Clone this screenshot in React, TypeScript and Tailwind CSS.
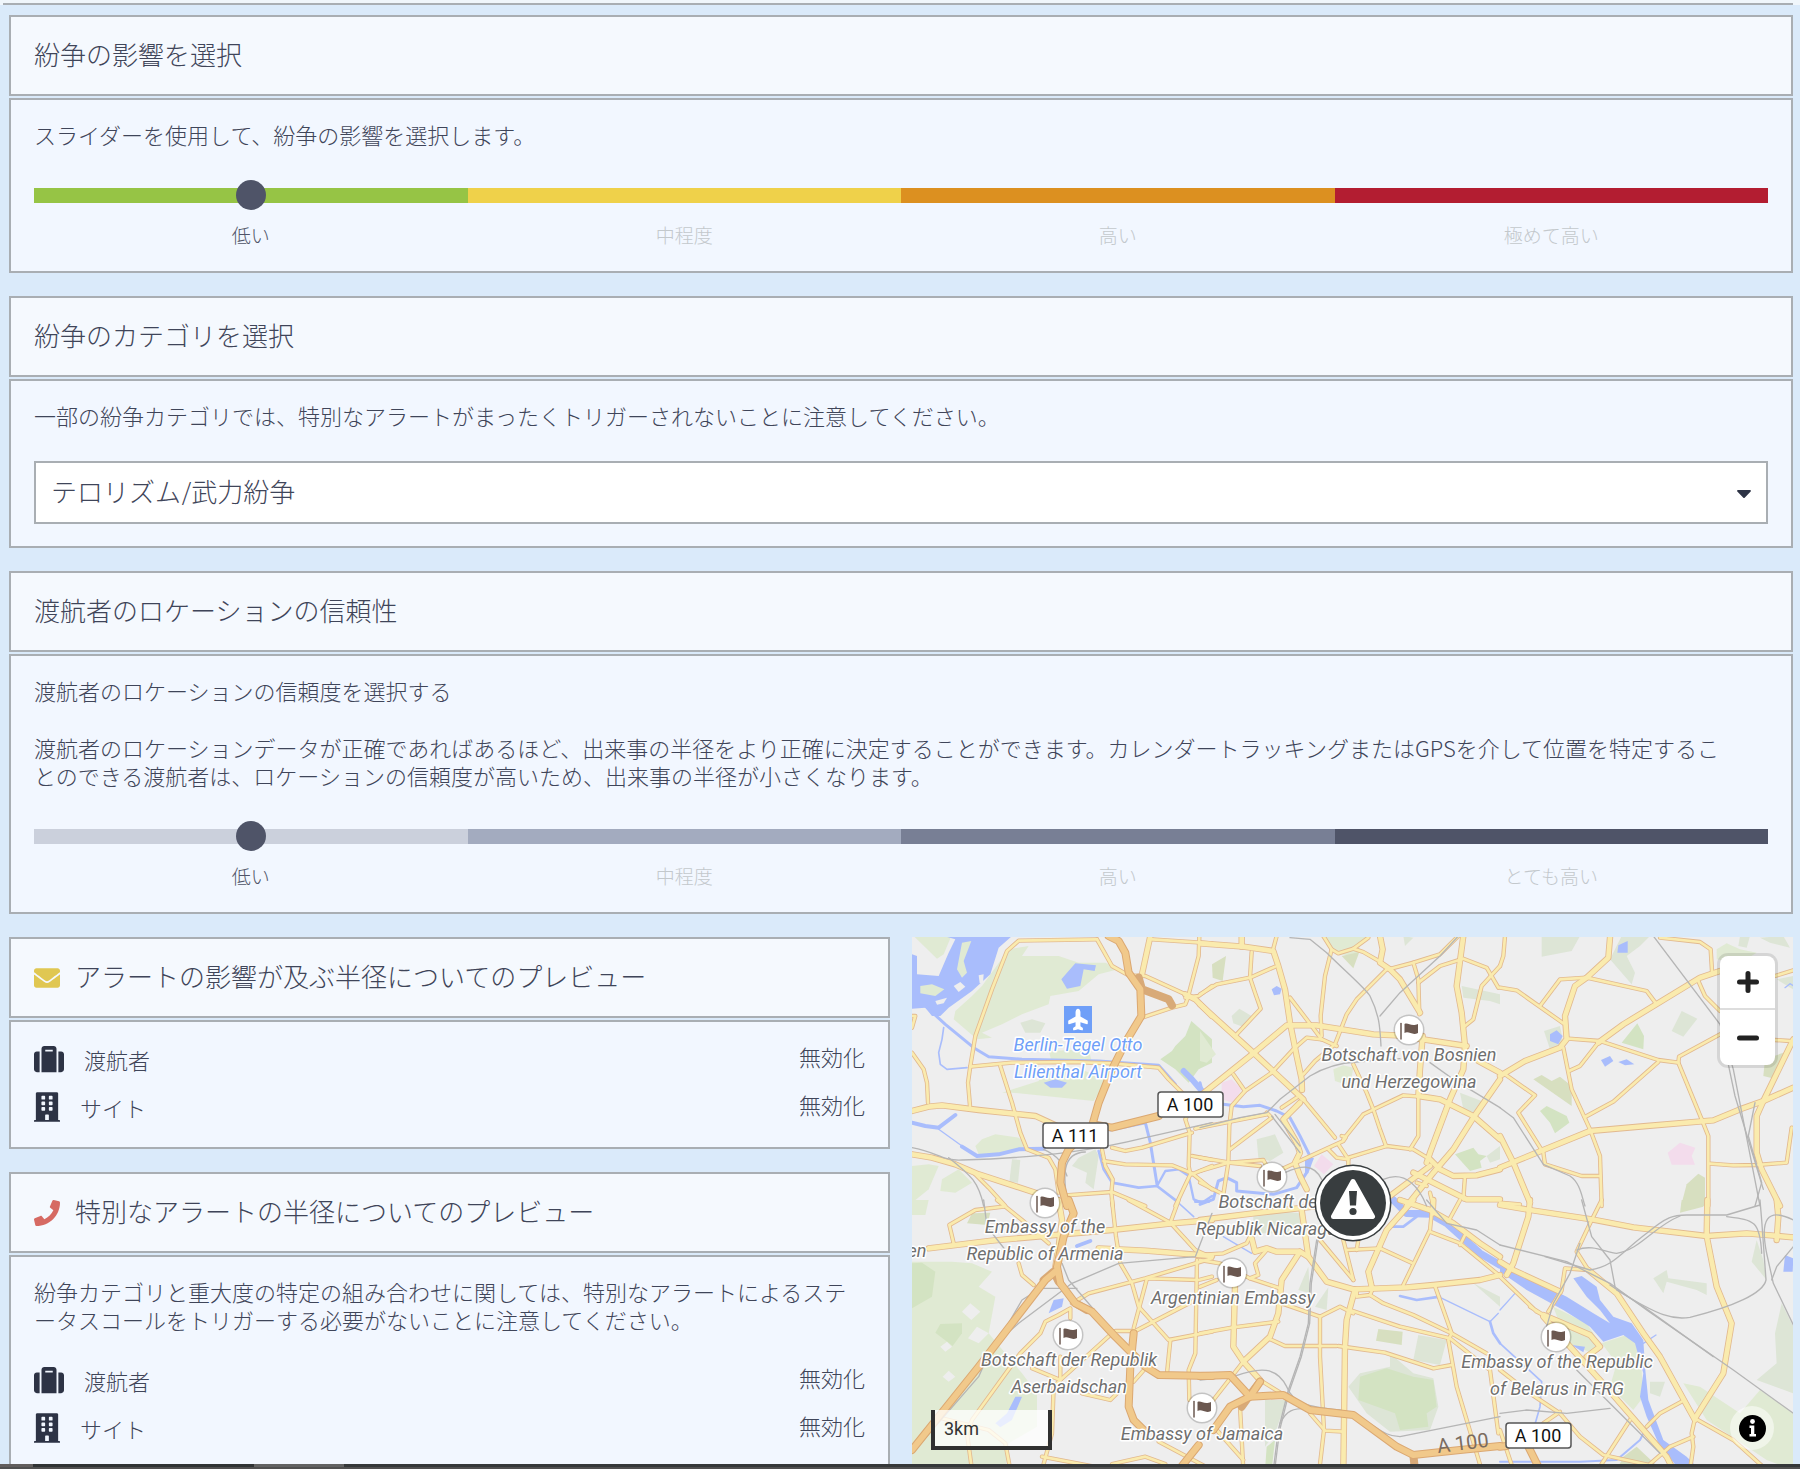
import React, { useState } from "react";
import {
  FaBuilding,
  FaCaretDown,
  FaEnvelope,
  FaPhone,
  FaPlane,
  FaSuitcase,
} from "react-icons/fa";

/* ---------- panels ---------- */

function Panel({
  title,
  icon,
  children,
}: {
  title: string;
  icon?: React.ReactNode;
  children: React.ReactNode;
}) {
  return (
    <section className="flex flex-col gap-[2px]">
      <header className="flex h-[81px] items-center gap-[15px] border-2 border-[#a9aeb3] bg-[#f5f9fe] px-[23px]">
        {icon}
        <h2 className="pb-1 text-[26px] leading-[32px]">{title}</h2>
      </header>
      <div className="border-2 border-[#a9aeb3] bg-[#f2f7ff] px-[23px] pt-5 pb-[22px] text-[22px] leading-[28px]">
        {children}
      </div>
    </section>
  );
}

function LevelSlider({
  label,
  colors,
  levels,
}: {
  label: string;
  colors: string[];
  levels: string[];
}) {
  const [value, setValue] = useState(0);
  return (
    <div className="mt-8">
      <div className="grid h-[30px] items-center">
        <div className="col-start-1 row-start-1 grid h-[15px] grid-cols-4">
          {colors.map((c) => (
            <div key={c} className={c} />
          ))}
        </div>
        <input
          type="range"
          aria-label={label}
          min={0}
          max={levels.length - 1}
          value={value}
          onChange={(e) => setValue(Number(e.target.value))}
          className="z-10 col-start-1 row-start-1 mx-[calc(12.5%-15px)] h-[30px] cursor-pointer appearance-none bg-transparent [&::-webkit-slider-thumb]:h-[30px] [&::-webkit-slider-thumb]:w-[30px] [&::-webkit-slider-thumb]:appearance-none [&::-webkit-slider-thumb]:rounded-full [&::-webkit-slider-thumb]:bg-[#4f5468]"
        />
      </div>
      <div className="mt-[11px] grid grid-cols-4 text-center text-[19px]">
        {levels.map((l, i) => (
          <span key={l} className={i === value ? "text-[#4f5468]" : "text-[#c3c8cc]"}>
            {l}
          </span>
        ))}
      </div>
    </div>
  );
}

function StatusRow({ icon, name, value }: { icon: React.ReactNode; name: string; value: string }) {
  return (
    <div className="flex h-[30px] items-center justify-between">
      <dt className="flex items-center gap-5">
        {icon}
        {name}
      </dt>
      <dd className="pb-[6px]">{value}</dd>
    </div>
  );
}

function StatusRows() {
  return (
    <dl className="flex flex-col gap-[18px] pt-[2px] pb-[3px]">
      <StatusRow
        icon={<FaSuitcase className="h-[30px] w-[30px] text-[#2d3345]" />}
        name="渡航者"
        value="無効化"
      />
      <StatusRow
        icon={<FaBuilding className="h-[30px] w-[26px] text-[#2d3345]" />}
        name="サイト"
        value="無効化"
      />
    </dl>
  );
}

/* ---------- map ---------- */

type Tile = {
  x: number;
  y: number;
  green?: string[];
  park?: string[];
  sage?: string[];
  olive?: string[];
  land?: string[];
  pink?: string[];
  water?: string[];
  rivers?: [string, number][];
  rails?: string[];
  minor: string[];
  major: string[];
  motorway?: string[];
  ramp?: string[];
};

const tiles: Tile[] = [
  {
    x: 912,
    y: 936,
    green: [
      "M5,0 L118,0 L95,55 L75,68Z",
      "M290,40 L350,30 L330,60 L440,60 L500,80 L580,80 L625,98 L560,115 L500,165 L415,180 L410,205 L330,235 L270,265 L210,290 L240,305 L195,310 L125,250 L130,225 L180,180 L210,150Z",
      "M270,470 L380,435 L390,410 L520,405 L585,435 L545,495 L400,480 L300,470Z",
      "M410,345 L530,340 L540,380 L420,380Z",
      "M210,610 L250,595 L320,605 L345,625 L300,650 L200,655 L190,630Z",
      "M90,730 L140,700 L180,740 L130,770 L85,765Z",
      "M0,690 L50,685 L80,690 L50,760 L0,800Z",
    ],
    park: ["M838,255 L900,310 L900,380 L860,400 L830,440 L790,400 L745,370 L780,345 L790,330 L820,300Z"],
    sage: [
      "M325,260 L360,250 L400,262 L385,290 L340,290Z",
      "M300,670 L325,672 L318,740 L292,738Z",
      "M500,665 L550,640 L560,660 L545,760 L520,740 L525,710 L480,690Z",
    ],
    water: [
      "M95,0 L300,0 L260,35 L235,115 L180,165 L110,215 L85,240 L60,240 L40,215 L0,218 L0,55 L15,60 L15,115 L80,120 L110,50 L130,10Z",
      "M490,82 L552,88 L548,105 L515,100 L505,150 L465,158 L448,130Z",
      "M395,440 L430,430 L465,440 L450,455 L415,455Z",
    ],
    land: [
      "M125,150 L145,138 L160,152 L140,168Z",
      "M200,118 L215,115 L213,140 L203,142Z",
      "M70,195 L105,185 L95,202 L75,206Z",
    ],
    olive: [],
    rivers: [
      ["M40,210 L100,265 L185,335 L230,362 L330,370 L560,375 L740,388 L760,410 L790,445", 9],
      ["M95,275 L90,310 L80,350 L85,385 L105,400 L165,395", 5],
      ["M815,405 L840,430 L870,465", 18],
      ["M0,560 L40,570 L80,575 L130,537", 12],
      ["M80,580 L150,630", 4],
      ["M150,632 L195,660 L260,655 L320,640 L395,638", 12],
      ["M560,645 L575,700 L600,740 L680,755 L735,750 L800,800", 8],
      ["M595,582 L700,560 L715,620 L735,745", 9],
      ["M735,750 L760,705 L800,700 L830,720 L845,790 L870,800 L900,780", 7],
    ],
    rails: [
      "M0,635 C80,650 90,675 150,672 C400,665 560,640 700,605 L900,560",
      "M110,665 C180,720 200,740 215,810",
      "M470,810 C450,720 450,650 520,648",
      "M395,640 C440,660 450,680 465,720",
    ],
    minor: [
      "M555,10 L320,14 L285,45 L240,160 L190,300 L175,390 L168,440 L174,510",
      "M175,392 L300,380 L480,378 L600,382 L740,395 L770,430 L830,490 L830,530 L820,550 L833,590 L830,690 L835,715",
      "M555,10 L600,90 L650,118 L700,120 L820,175",
      "M720,10 L900,22",
      "M862,0 L860,60 L830,175",
      "M820,185 L860,180 L900,150",
      "M690,245 L780,215 L820,205 L830,180",
      "M0,350 L35,400 L45,440 L48,500",
      "M0,240 L10,240 L0,275",
      "M265,390 L300,500 L325,590 L345,640 L410,665 L430,700 L440,770",
      "M185,710 L230,755 L280,810",
      "M460,778 L600,768 L700,810",
      "M570,640 L580,690 L602,730 L598,770 L602,810",
      "M575,675 L640,685 L780,688 L840,712 L900,760",
      "M600,635 L640,645 L690,635 L840,590",
      "M850,578 L900,565",
      "M840,660 L900,672",
      "M840,715 L900,690",
      "M835,715 L790,810",
    ],
    major: [
      "M715,0 L690,115",
      "M820,175 L850,190 L900,240",
      "M0,525 L50,512 L90,508 L200,522 L370,540 L435,570",
      "M0,655 L60,665 L130,685 L200,715 L370,770",
    ],
    motorway: [
      "M590,0 L620,15 L640,50 L650,110 L685,160 L688,240 L640,320 L600,400 L560,500 L540,570 L470,640 L450,680 L445,740 L465,810",
      "M545,565 L600,575 L740,540",
    ],
    ramp: ["M680,125 L690,160 L770,190 L780,208"],
  },
  {
    x: 1200,
    y: 936,
    green: [
      "M0,285 L48,355 L20,380 L0,375Z",
      "M365,0 L500,0 L480,30 L470,60 L420,55 L385,30Z",
      "M400,400 L430,388 L460,395 L450,450 L405,435Z",
    ],
    olive: ["M36,85 L78,60 L68,135 L38,125Z", "M425,60 L478,48 L460,97Z"],
    park: ["M765,655 L820,635 L835,655 L860,660 L840,675 L845,695 L810,705Z"],
    sage: [
      "M95,240 L118,218 L155,240 L128,272 L100,262Z",
      "M610,0 L640,5 L615,30Z",
      "M785,150 L900,175 L900,205 L870,195 L790,185Z",
      "M780,470 L845,495 L820,530 L790,520Z",
      "M170,610 L225,595 L250,650 L210,675 L175,665Z",
      "M860,660 L900,630 L900,670 L870,680Z",
    ],
    water: ["M215,160 L230,150 L245,158 L240,175 L222,178Z", "M315,670 L342,665 L325,712 L315,710Z"],
    rivers: [
      ["M0,440 L10,480 L70,505 L130,512 L180,508 L230,525 L270,545 L300,600 L335,670", 9],
      ["M320,710 L290,755 L220,775 L110,765 L110,740 L80,725 L55,735 L40,790 L0,805", 9],
    ],
    pink: ["M65,440 L95,430 L125,460 L100,500 L65,490Z", "M365,655 L400,685 L372,715 L342,690Z"],
    rails: [
      "M270,5 L330,10 L380,50 C430,100 500,160 510,180 C540,240 540,280 543,330",
      "M775,0 L720,60 L600,170 L540,240",
      "M0,575 L120,545 L200,530 L240,490 L330,420 C380,390 430,380 470,378 L600,368",
      "M215,540 L300,650",
      "M225,535 L300,630",
      "M550,730 C620,700 660,760 680,810",
      "M690,380 L760,430 L900,515",
      "M255,710 C300,690 340,680 365,730",
    ],
    minor: [
      "M230,0 L218,45",
      "M155,48 L150,125 L165,170 L182,218 L110,295",
      "M0,175 L50,145 L150,125 L225,92",
      "M310,490 L360,550 L405,605",
      "M100,415 L135,465 L95,510 L88,570 L85,680 L70,775",
      "M135,465 L215,410 L280,340 L320,305 L365,310 L410,330",
      "M395,40 L375,120 L362,240 L365,300",
      "M270,185 L320,250 L365,310",
      "M370,0 L395,40 L415,52 L460,38 L505,5",
      "M460,38 L490,48 L545,80 L570,100",
      "M565,100 L640,80 L720,55 L775,0",
      "M560,100 L470,190 L440,235 L405,325 L345,375 L310,415",
      "M640,80 L655,130 L658,235",
      "M655,480 L655,600 L630,640",
      "M655,140 L720,90 L790,68 L860,95 L895,155",
      "M900,90 L845,150 L820,250 L795,270",
      "M430,610 L490,535 L610,478 L660,482",
      "M460,385 L500,470 L520,520 L540,580 L558,630",
      "M445,665 L560,630 L640,640 L690,670",
      "M245,515 L290,485",
      "M245,700 L430,615 L438,603 L425,600",
      "M90,640 L215,545 L200,530",
      "M0,575 L200,535",
      "M0,665 L90,680 L190,672 L200,690",
      "M0,705 L85,680 L180,690",
      "M0,740 L70,775",
      "M385,640 L410,665 L445,670 L445,700",
      "M415,625 L445,670",
      "M795,720 L790,790",
      "M690,770 L700,810",
      "M650,740 L680,750",
    ],
    major: [
      "M0,22 L130,32 L220,45 L235,90 L255,160 L270,260 L290,360 L305,430 L306,462",
      "M125,0 L125,32",
      "M0,205 L160,350 L310,490",
      "M0,480 L100,400 L160,352 L260,268 L350,268 L520,295 L590,298 L800,330",
      "M540,0 L548,40 L540,80 L570,100 L600,130 L660,230",
      "M668,300 L660,400 L655,480 L720,490 L820,540 L900,610",
      "M790,0 L770,150 L785,230 L795,330 L790,400 L750,490 L690,650 L680,680",
      "M900,430 L820,545 L760,640 L700,710 L620,810",
      "M300,500 L250,550 L290,620 L300,650 L285,680 L300,720 L320,760",
      "M690,670 L720,700 L760,720 L830,718 L900,700",
      "M570,780 L690,690",
      "M640,710 L740,760 L800,790 L900,790",
      "M835,375 L900,410",
    ],
  },
  {
    x: 1500,
    y: 936,
    sage: [
      "M125,0 L240,0 L215,45 L125,62Z",
      "M365,0 L450,0 L420,30 L380,60 L405,110 L395,145 L330,70Z",
      "M545,225 L592,248 L550,302 L515,285Z",
      "M720,0 L750,0 L740,35 L715,30Z",
      "M780,5 L850,0 L870,35 L810,20Z",
      "M132,285 L180,270 L190,320 L150,340Z",
      "M830,130 L880,120 L880,160Z",
    ],
    green: ["M650,40 L680,22 L720,40 L770,50 L720,80 L650,70Z"],
    park: ["M412,262 L432,300 L430,340 L365,320Z", "M120,525 L140,510 L200,540 L208,560 L165,592 L150,560Z"],
    olive: [
      "M100,430 L125,417 L155,435 L180,422 L215,450 L215,510Z",
      "M595,713 L615,725 L615,810 L543,810 L560,745Z",
      "M795,370 L850,350 L830,430 L790,420Z",
    ],
    water: [
      "M355,28 L383,15 L383,50 L352,50Z",
      "M150,295 L170,283 L188,300 L175,325 L150,315Z",
      "M303,372 L330,360 L340,375 L315,392Z",
      "M355,378 L380,370 L403,385 L375,388Z",
    ],
    rivers: [["M855,155 L870,143 L882,150", 4]],
    pink: ["M503,650 L540,620 L586,635 L575,660 L585,686 L515,686Z"],
    rails: [
      "M460,0 L660,265 L700,400 L780,810",
      "M0,515 L40,545 L130,685 L210,720 C240,740 245,780 255,810",
      "M685,385 L705,480 L790,760",
      "M765,500 L745,600 L785,740 L765,810",
    ],
    minor: [
      "M15,0 L10,60 L0,90",
      "M120,210 L180,130 L260,125 L440,165 L470,205",
      "M0,155 L50,163 L190,262",
      "M295,320 L240,390 L207,405",
      "M205,308 L300,315 L475,372 L535,380 L605,550",
      "M190,335 L215,460 L270,580 L300,660 L305,810",
      "M255,543 L340,497 L475,378",
      "M535,380 L537,362 L660,295",
      "M480,5 L600,18 L632,40 L636,105",
      "M595,135 L615,180 L660,225",
      "M825,120 L880,103",
      "M825,312 L870,315",
      "M15,415 L105,478 L55,530 L130,650 L135,685 L245,720 L300,720",
      "M605,550 L625,600 L625,810",
      "M630,683 L700,688 L770,687 L860,680 L875,575",
      "M0,800 L60,805",
    ],
    major: [
      "M330,5 L325,65 L260,125 L225,150 L195,240 L200,310 L180,335 L75,375 L0,420",
      "M660,105 L600,125 L370,265 L295,320",
      "M880,310 L790,495 L770,540 L770,650 L785,700 L840,810",
      "M0,695 L270,585 L440,570 L640,553 L720,520 L790,495 L880,455",
      "M0,600 L40,680 L90,800",
    ],
  },
  {
    x: 912,
    y: 1200,
    green: [
      "M0,185 L120,185 L180,190 L240,215 L200,260 L250,290 L230,400 L330,520 L375,580 L375,680 L290,730 L280,810 L0,810Z",
      "M0,0 L50,0 L40,45 L0,45Z",
    ],
    park: ["M0,190 L30,188 L70,215 L60,290 L0,325Z", "M85,372 L150,370 L150,400 L122,438 L70,398Z"],
    olive: ["M165,70 L180,40 L235,38 L225,75Z"],
    land: [
      "M175,310 L205,335 L178,360 L150,335Z",
      "M195,380 L230,400 L200,430 L168,415Z",
      "M110,512 L130,530 L110,545 L92,530Z",
      "M105,425 L120,440 L100,455 L85,440Z",
    ],
    water: ["M410,340 L425,300 L455,295 L450,320Z", "M310,590 L330,590 L300,660 L265,682 L250,670 L285,640Z"],
    rivers: [
      ["M495,138 L535,123", 12],
      ["M790,0 L845,50", 5],
      ["M850,5 L890,5", 8],
    ],
    rails: [
      "M215,0 L225,80 L280,150",
      "M240,440 L320,370 L480,250 L620,190 L850,170 L900,40",
      "M215,500 L330,300 L385,265 L495,265",
      "M450,190 L470,240 L640,440 L740,530",
      "M0,760 L200,530 L240,440",
    ],
    minor: [
      "M125,130 L112,75 L190,30 L275,20",
      "M255,0 L330,60 L410,130",
      "M320,190 L330,225 L365,255",
      "M600,0 L612,110 L625,190 L660,250 L680,320 L770,420 L900,395",
      "M480,310 L530,280 L700,235 L900,175",
      "M650,0 L775,68 L850,150 L895,170",
      "M800,0 L775,68",
      "M475,355 L475,325 L440,345 L400,365 L385,400 L325,460 L180,660 L165,700 L180,810",
      "M600,400 L445,540 L425,560 L420,700 L390,810",
      "M360,505 L445,540 L445,470",
      "M610,393 L670,393 L850,300",
      "M665,385 L705,235 L860,240 L900,230",
      "M855,180 L850,460 L830,510 L832,600",
      "M775,420 L765,520",
      "M665,545 L700,505",
      "M510,580 L595,600 L620,575",
      "M90,655 L230,690 L280,730 L295,810",
      "M390,770 L600,810",
      "M600,792 L700,770 L760,792",
      "M740,725 L900,810",
    ],
    major: [
      "M50,145 L240,122 L430,105 L600,90 L780,70 L900,60",
      "M560,145 L700,152 L900,168",
      "M430,200 L440,140 L450,60 L440,0",
    ],
    motorway: [
      "M0,750 L200,500 L400,240 L430,215",
      "M470,0 L485,40 L455,110 L435,200 L445,250 L490,310 L540,335 L610,410 L700,500 L740,525 L900,528",
      "M665,400 L655,500 L650,620 L665,660 L700,695",
      "M860,735 L800,810",
    ],
    ramp: ["M395,240 L425,215 L440,245", "M500,315 L525,330"],
  },
  {
    x: 1200,
    y: 1200,
    sage: [
      "M160,40 L200,30 L300,40 L300,100 L160,100Z",
      "M325,200 L330,280 L295,270Z",
      "M345,320 L385,262 L380,330Z",
      "M655,405 L740,420 L720,495 L640,480Z",
      "M445,560 L480,520 L570,500 L570,460 L640,520 L700,535 L715,620 L690,690 L570,695 L500,640Z",
      "M195,600 L260,600 L225,700 L195,740Z",
      "M820,250 L900,290 L900,320Z",
    ],
    park: ["M480,530 L560,505 L640,530 L700,540 L710,620 L680,640 L685,680 L600,690 L585,640 L475,600Z", "M200,740 L225,720 L215,810 L195,810Z"],
    olive: ["M535,387 L608,395 L605,435 L528,422Z"],
    rivers: [
      ["M580,0 L620,40 L690,42 L740,70 L790,115 L840,160 L900,195", 22],
      ["M570,80 L610,80 L650,50", 8],
      ["M600,288 L650,300 L720,290", 8],
      ["M720,292 L870,365 L895,340", 4],
      ["M870,365 L880,400 L900,430", 8],
      ["M70,110 L155,160", 4],
    ],
    rails: [
      "M350,120 L330,250 L325,370 L300,470 L265,570 L235,690 L220,810",
      "M354,120 L334,250 L329,370 L304,470 L269,570 L239,690 L224,810",
      "M0,540 L100,530 C180,500 230,500 260,560 C280,610 320,620 420,630 C520,660 540,710 600,710 L900,650",
      "M240,670 C260,630 280,625 320,625",
      "M680,0 L740,70 L830,90 L900,135",
    ],
    minor: [
      "M0,165 L70,160 L140,130 L150,110",
      "M0,180 L60,190 L150,235 L240,265 L245,310 L360,350 L420,320 L460,340",
      "M150,235 L175,225 L165,190 L200,150",
      "M0,400 L100,382 L235,365",
      "M180,540 L260,590",
      "M360,120 L460,240",
      "M430,120 L460,240",
      "M440,150 L540,145 L635,188",
      "M475,120 L470,150",
      "M360,350 L360,470 L372,690 L358,810",
      "M205,415 L255,438 L410,438",
      "M415,438 L555,458 L700,505 L755,495",
      "M510,285 L550,310 L640,345 L755,400 L860,460",
      "M450,330 L600,380 L750,415 L870,510 L895,700",
      "M470,270 L470,290 L510,285 L520,262",
      "M705,258 L755,400 L745,420 L770,560 L845,810",
      "M695,40 L690,90 L610,255",
      "M690,95 L780,130 L890,220",
      "M795,105 L780,135",
      "M780,0 L750,55",
      "M0,260 L50,240",
      "M130,485 L40,600",
      "M120,620 L130,810",
      "M50,690 L130,780",
      "M330,640 L375,692 L430,695",
    ],
    major: [
      "M0,60 L160,40 L340,20",
      "M155,115 L165,155 L200,145 L230,155 L300,155 L325,170",
      "M305,30 L325,170 L380,245 L460,268 L620,262 L700,255 L840,240 L900,225",
      "M300,155 L245,240 L235,340 L210,410 L130,485",
      "M105,260 L100,440 L130,485 L180,540",
      "M640,0 L560,90 L505,215 L515,260",
      "M465,268 L440,360 L435,440 L430,810",
      "M600,0 L690,30 L760,70 L840,130 L900,170",
      "M700,0 L698,40",
    ],
    motorway: [
      "M0,528 L90,525 L150,590 L250,585 L330,630 L460,645 L590,740 L640,765 L780,750 L900,738",
      "M180,545 L150,590 L90,620 L40,690",
    ],
    ramp: ["M180,545 L150,585 L125,620", "M640,765 L645,810"],
  },
  {
    x: 1500,
    y: 1200,
    green: [
      "M160,320 L260,370 L300,430 L280,460 L200,430Z",
      "M305,430 L380,405 L420,440 L430,590 L400,630 L330,560 L350,490Z",
      "M550,550 L600,560 L720,640 L780,570 L880,640 L880,810 L800,780 L620,660Z",
    ],
    sage: [
      "M460,235 L500,210 L505,235 L620,250 L620,285 L590,270 L500,245 L490,280Z",
      "M770,120 L790,180 L800,240 L755,185Z",
      "M845,310 L880,380 L880,580 L770,540 L830,490 L825,400Z",
      "M450,545 L495,545 L480,590 L450,580Z",
    ],
    olive: ["M545,0 L615,0 L610,20 L540,38Z", "M370,770 L410,740 L465,792 L440,810 L350,810Z"],
    water: [
      "M0,190 L120,250 L200,290 L280,340 L330,370 L300,330 L260,290 L220,235 L245,228 L290,260 L300,300 L340,350 L395,370 L430,420 L435,500 L445,600 L490,720 L560,770 L600,810 L540,810 L480,740 L440,650 L420,590 L430,520 L405,430 L370,405 L310,425 L270,380 L190,330 L80,270 L0,215Z",
      "M855,165 L880,175 L878,215 L850,215Z",
      "M215,435 L255,440 L250,457Z",
    ],
    rivers: [
      ["M0,430 L125,545 L120,620 L100,690", 5],
      ["M0,330 L45,280", 4],
      ["M0,785 L240,785 L350,780 L420,720 L445,670", 6],
      ["M430,430 L468,405", 4],
    ],
    rails: [
      "M0,135 L200,185 L330,250 L440,330 L700,510 L880,640",
      "M330,255 L430,320 L640,470",
      "M135,170 L270,210 C340,200 360,160 440,100 C500,50 520,45 560,45 L680,45 L780,15",
      "M245,0 L275,110 L330,180 L345,260",
      "M230,150 C280,130 320,160 350,160 C420,150 460,80 540,48",
      "M350,270 C480,350 520,360 570,352 C700,320 790,280 798,240 L785,60 L780,0",
      "M880,60 C800,20 780,60 800,160 L820,250 L880,375",
      "M880,140 L830,200 L815,240",
      "M0,640 L80,630 L200,640 L330,625",
      "M140,380 L160,310 L210,220 L240,130",
      "M230,510 L480,760",
      "M680,50 C760,60 780,60 785,160",
    ],
    minor: [
      "M305,0 L275,60 L230,155 L265,210",
      "M145,335 L185,270 L195,205 L265,210",
      "M0,230 L110,335 L130,345 L90,320",
      "M585,655 L700,720 L800,810",
      "M545,605 L480,640 L440,680",
      "M450,792 L510,740 L580,710",
      "M0,510 L90,580 L180,640 L240,710 L310,765 L470,800",
      "M305,792 L390,660",
      "M130,670 L180,635",
      "M585,655 L575,700 L580,740 L570,810",
      "M0,690 L40,810",
    ],
    major: [
      "M0,15 L90,30 L275,58 L400,82 L620,108 L740,100 L880,112",
      "M90,0 L85,50 L40,190 L20,225",
      "M0,185 L40,210 L180,275",
      "M265,210 L350,280 L430,400 L480,470 L585,660",
      "M130,345 L270,405 L300,440 L260,470",
      "M130,350 L210,440 L300,540 L500,770 L520,810",
      "M622,0 L620,108 L650,260 L695,370 L670,520 L585,655",
      "M830,0 L835,50 L830,120",
    ],
    motorway: ["M0,740 L20,738", "M80,730 L120,810"],
  },
];

function Layer({ render }: { render: (t: Tile) => React.ReactNode }) {
  return (
    <>
      {tiles.map((t, i) => (
        <g key={i} transform={`translate(${t.x} ${t.y}) scale(0.33333)`}>
          {render(t)}
        </g>
      ))}
    </>
  );
}

const areas = (ds: string[] | undefined, fill: string) =>
  (ds ?? []).map((d, i) => <path key={fill + i} d={d} fill={fill} />);

const lines = (ds: string[] | undefined, stroke: string, w: number) =>
  (ds ?? []).map((d, i) => <path key={stroke + w + i} d={d} stroke={stroke} strokeWidth={w} />);

const places: { x: number; y: number; lines: string[]; flag?: [number, number] }[] = [
  { x: 1409, y: 1061, lines: ["Botschaft von Bosnien", "und Herzegowina"], flag: [1409, 1030] },
  { x: 1271, y: 1208, lines: ["Botschaft der", "Republik Nicaragua"], flag: [1272, 1177] },
  { x: 1045, y: 1233, lines: ["Embassy of the", "Republic of Armenia"], flag: [1045, 1203] },
  { x: 1233, y: 1304, lines: ["Argentinian Embassy"], flag: [1232, 1273] },
  { x: 1069, y: 1366, lines: ["Botschaft der Republik", "Aserbaidschan"], flag: [1068, 1335] },
  { x: 1202, y: 1440, lines: ["Embassy of Jamaica"], flag: [1202, 1408] },
  { x: 1557, y: 1368, lines: ["Embassy of the Republic", "of Belarus in FRG"], flag: [1556, 1337] },
  { x: 917, y: 1257, lines: ["en"] },
];

const shields = [
  { x: 1157, y: 1091, text: "A 100" },
  { x: 1042, y: 1122, text: "A 111" },
  { x: 1505, y: 1422, text: "A 100" },
];

function MapDrawing() {
  return (
    <svg
      viewBox="912 937 881 533"
      preserveAspectRatio="xMidYMid slice"
      className="absolute inset-0 h-full w-full"
      fill="none"
      strokeLinecap="round"
      strokeLinejoin="round"
      role="img"
      aria-label="Berlin"
    >
      <rect x="912" y="937" width="881" height="533" fill="#eeeeee" />
      <Layer
        render={(t) => (
          <>
            {areas(t.green, "#e0ead3")}
            {areas(t.sage, "#dde5d6")}
            {areas(t.park, "#d3e3c2")}
            {areas(t.olive, "#d7dfc0")}
            {areas(t.pink, "#f3dcec")}
            {areas(t.water, "#a9bdfc")}
            {areas(t.land, "#eeeeee")}
            {(t.rivers ?? []).map(([d, w], i) => (
              <path key={i} d={d} stroke="#a9bdfc" strokeWidth={w} />
            ))}
          </>
        )}
      />
      <g transform="translate(912 936) scale(0.33333)" fill="#e0ead3">
        <path d="M150,20 L178,15 L155,75 L165,110 L150,125 L135,100Z" />
        <path d="M25,150 L60,145 L97,160 L70,180 L25,172Z" />
      </g>
      <Layer render={(t) => lines(t.minor, "#e2b98f", 13)} />
      <Layer render={(t) => lines(t.major, "#e2b98f", 19)} />
      <Layer render={(t) => lines(t.minor, "#faebae", 8)} />
      <Layer render={(t) => lines(t.major, "#faebae", 14)} />
      <Layer render={(t) => lines(t.rails, "#b5b5b5", 4)} />
      <Layer render={(t) => lines(t.ramp, "#d8aa78", 24)} />
      <Layer render={(t) => lines(t.motorway, "#dba872", 24)} />
      <Layer render={(t) => lines(t.motorway, "#f1c98b", 18)} />

      <text x="1438" y="1453" fontSize="20" fill="#7b6c5f" transform="rotate(-7 1438 1453)">
        A 100
      </text>

      {places.map((p) => (
        <g key={p.lines[0] + p.x}>
          {p.flag && (
            <g transform={`translate(${p.flag[0]} ${p.flag[1]})`}>
              <circle r="15.5" fill="#000" opacity="0.18" />
              <circle r="14" fill="#fff" />
              <path d="M-8,-6.500 V9" stroke="#6b5850" strokeWidth="1.500" />
              <path d="M-4.500,-6 C-1,-8 2,-3 9,-6 V3 C3,6 0,0.500 -4.500,3Z" fill="#6b5850" />
            </g>
          )}
          <text
            textAnchor="middle"
            fontSize="18"
            fontStyle="italic"
            fill="#6f6f6f"
            stroke="#fff"
            strokeWidth="3"
            paintOrder="stroke"
          >
            {p.lines.map((l, i) => (
              <tspan key={l} x={p.x} y={p.y + i * 27}>
                {l}
              </tspan>
            ))}
          </text>
        </g>
      ))}

      <rect x="1064" y="1006" width="28" height="27" fill="#6f9ff8" />
      <g transform="translate(1067 1030.500) rotate(-90)">
        <FaPlane x="0" y="0" size={22} color="#fff" />
      </g>
      <text
        textAnchor="middle"
        fontSize="18"
        fontStyle="italic"
        fill="#6f9ff8"
        stroke="#fff"
        strokeWidth="3"
        paintOrder="stroke"
      >
        <tspan x="1078" y="1051">Berlin-Tegel Otto</tspan>
        <tspan x="1078" y="1078">Lilienthal Airport</tspan>
      </text>

      {shields.map((s) => (
        <g key={`${s.x}`}>
          <rect x={s.x + 1} y={s.y + 1} width="65" height="25" rx="3" fill="#fff" stroke="#555" strokeWidth="1.500" />
          <text x={s.x + 33} y={s.y + 20} textAnchor="middle" fontSize="18" fill="#111">
            {s.text}
          </text>
        </g>
      ))}

      <g transform="translate(1353 1203)">
        <circle r="38.500" fill="#383d3f" />
        <circle r="37" fill="#fff" />
        <circle r="33" fill="#383d3f" />
        <path d="M0,-21.500 L19.500,13.500 H-19.500Z" fill="#fff" stroke="#fff" strokeWidth="5" />
        <path d="M-4,-12 H4 L3,2.500 H-3Z" fill="#383d3f" />
        <circle cy="8.500" r="3.600" fill="#383d3f" />
      </g>
    </svg>
  );
}

function MapView() {
  return (
    <div className="relative overflow-hidden font-['Roboto',sans-serif] font-normal">
      <MapDrawing />
      <div className="absolute top-[19px] right-[18px] flex w-[55px] flex-col divide-y-2 divide-[#dddddd] rounded-lg bg-white ring-3 ring-black/10">
        <button type="button" aria-label="+" className="flex h-[54px] items-center justify-center">
          <svg viewBox="0 0 22 22" className="h-[22px] w-[22px]" stroke="#222" strokeWidth="5" strokeLinecap="round">
            <path d="M2.500,11 H19.500 M11,2.500 V19.500" />
          </svg>
        </button>
        <button type="button" aria-label="−" className="flex h-[55px] items-center justify-center">
          <svg viewBox="0 0 22 22" className="h-[22px] w-[22px]" stroke="#222" strokeWidth="5" strokeLinecap="round">
            <path d="M2.500,11 H19.500" />
          </svg>
        </button>
      </div>
      <div className="absolute bottom-5 left-[19px] flex h-[40px] w-[121px] items-center border-4 border-t-0 border-[#303030] bg-white/75 pl-[9px] text-[18px] text-[#333]">
        3km
      </div>
      <button
        type="button"
        aria-label="i"
        className="absolute right-[19px] bottom-5 flex h-[44px] w-[44px] items-center justify-center rounded-full bg-white/50"
      >
        <svg viewBox="0 0 27 27" className="h-[27px] w-[27px]">
          <circle cx="13.500" cy="13.500" r="13.500" fill="#000" />
          <circle cx="13.500" cy="6.500" r="2.400" fill="#fff" />
          <path d="M10.500,10.500 H15.300 V19 H17 V21.500 H10.500 V19 H12 V13 H10.500Z" fill="#fff" />
        </svg>
      </button>
    </div>
  );
}

/* ---------- page ---------- */

export default function App() {
  return (
    <div
      lang="ja"
      className="flex h-screen flex-col bg-[#daeafa] font-['Noto_Sans_CJK_JP',sans-serif] font-light text-[#3f4559]"
    >
      <div className="bg-[#f0f6fb]">
        <div className="mr-[7px] ml-[3px] h-[5px] border-b-2 border-[#a9aeb3]" />
      </div>
      <main className="flex min-h-0 flex-1 flex-col gap-[23px] overflow-hidden pt-[10px] pr-[7px] pl-[9px] *:shrink-0">
        <Panel title="紛争の影響を選択">
          <p>スライダーを使用して、紛争の影響を選択します。</p>
          <LevelSlider
            label="紛争の影響"
            colors={["bg-[#96c445]", "bg-[#efd14a]", "bg-[#dc9020]", "bg-[#b31d31]"]}
            levels={["低い", "中程度", "高い", "極めて高い"]}
          />
        </Panel>

        <Panel title="紛争のカテゴリを選択">
          <p>一部の紛争カテゴリでは、特別なアラートがまったくトリガーされないことに注意してください。</p>
          <div className="relative mt-8">
            <select
              aria-label="紛争のカテゴリ"
              className="h-[63px] w-full appearance-none border-2 border-[#a9aeb3] bg-white pr-12 pb-[3px] pl-[15px] text-[26px]"
            >
              <option>テロリズム/武力紛争</option>
            </select>
            <FaCaretDown className="pointer-events-none absolute top-5 right-3 h-6 w-6 text-[#2d3345]" />
          </div>
        </Panel>

        <Panel title="渡航者のロケーションの信頼性">
          <p>渡航者のロケーションの信頼度を選択する</p>
          <p className="mt-[29px]">
            渡航者のロケーションデータが正確であればあるほど、出来事の半径をより正確に決定することができます。カレンダートラッキングまたはGPSを介して位置を特定するこ
            <br />
            とのできる渡航者は、ロケーションの信頼度が高いため、出来事の半径が小さくなります。
          </p>
          <LevelSlider
            label="渡航者のロケーションの信頼度"
            colors={["bg-[#cbd0dc]", "bg-[#a3abbf]", "bg-[#787f95]", "bg-[#4f5468]"]}
            levels={["低い", "中程度", "高い", "とても高い"]}
          />
        </Panel>

        <div className="grid grid-cols-2 gap-x-[22px]">
          <div className="flex flex-col gap-[23px]">
            <Panel
              title="アラートの影響が及ぶ半径についてのプレビュー"
              icon={<FaEnvelope className="h-[26px] w-[26px] text-[#e0c752]" />}
            >
              <StatusRows />
            </Panel>
            <Panel
              title="特別なアラートの半径についてのプレビュー"
              icon={<FaPhone className="h-[26px] w-[26px] text-[#d66a63]" />}
            >
              <p className="mb-[30px]">
                紛争カテゴリと重大度の特定の組み合わせに関しては、特別なアラートによるステ
                <br />
                ータスコールをトリガーする必要がないことに注意してください。
              </p>
              <StatusRows />
            </Panel>
          </div>
          <MapView />
        </div>
      </main>
      <div className="flex h-[5px] shrink-0 border-b-2 border-[#505050] bg-[#353839]">
        <div className="w-[33px] bg-[#625e5d]" />
        <div className="w-[221px] bg-[#303334]" />
        <div className="w-[90px] bg-[#626262]" />
      </div>
    </div>
  );
}
